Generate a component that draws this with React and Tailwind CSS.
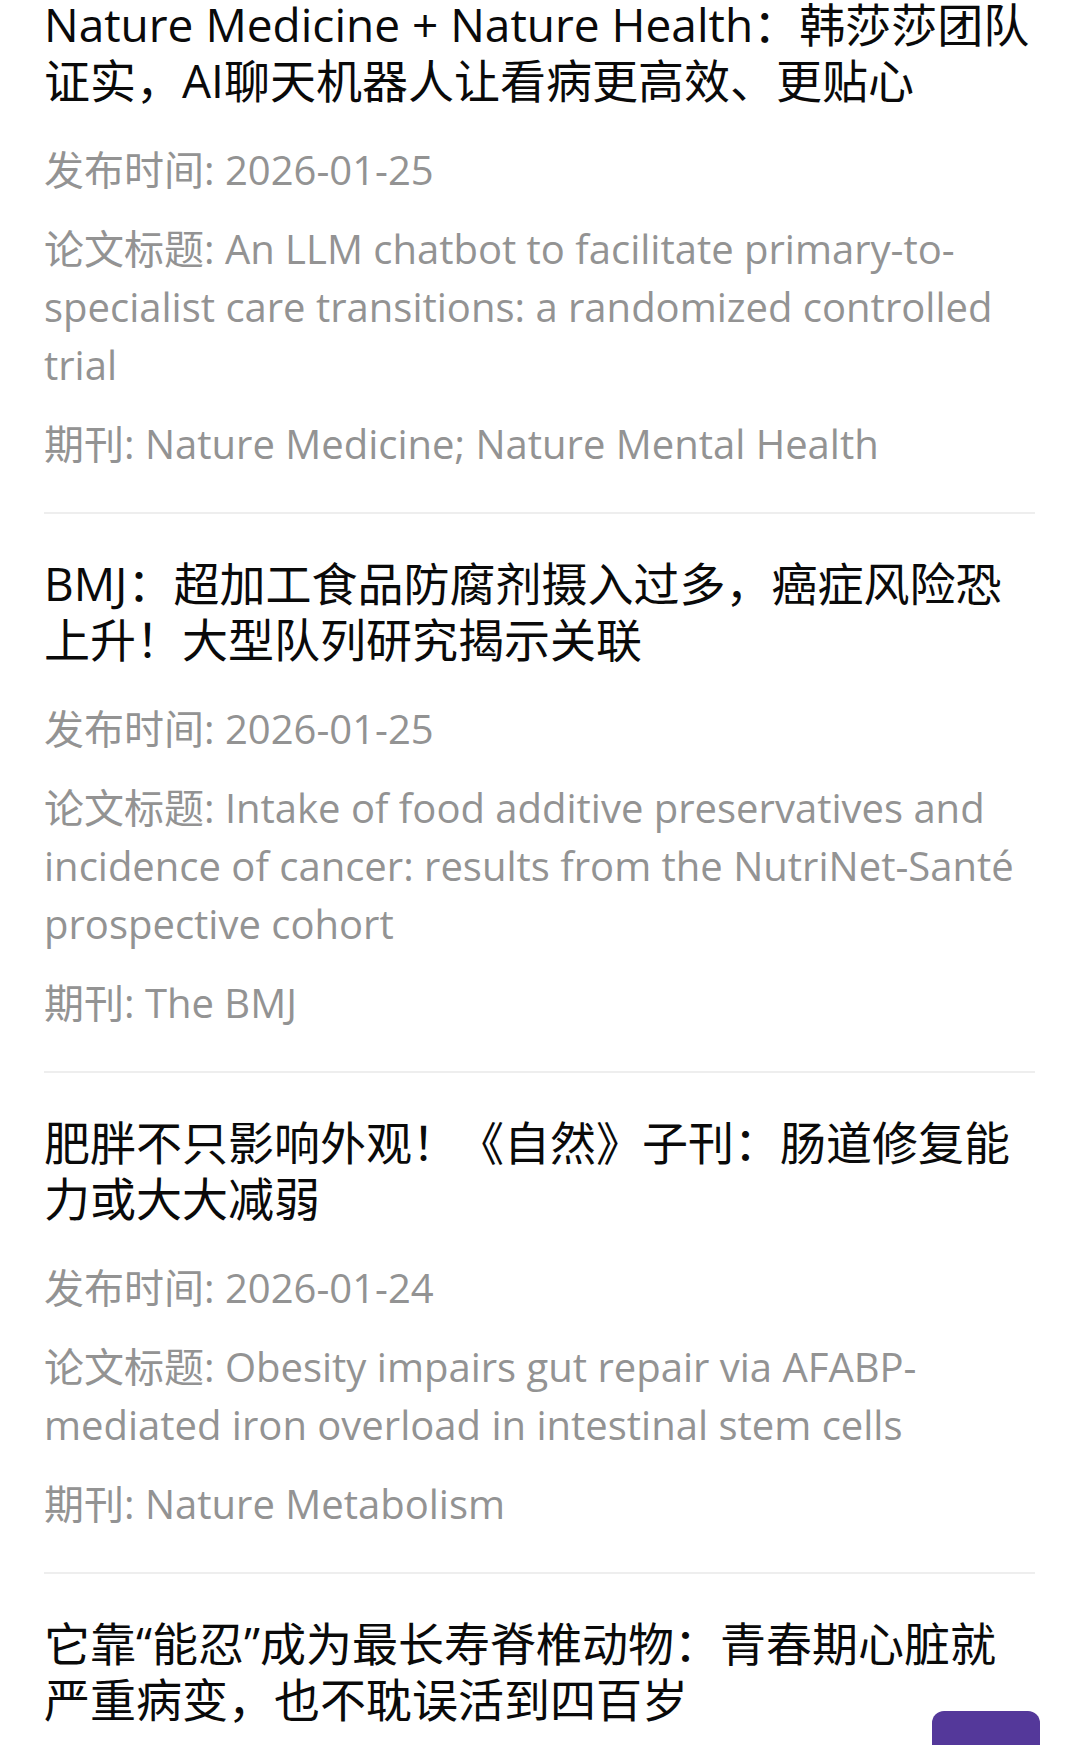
import React from "react";

const items = [
  {
    title: "Nature Medicine + Nature Health：韩莎莎团队证实，AI聊天机器人让看病更高效、更贴心",
    date: "2026-01-25",
    paper: "An LLM chatbot to facilitate primary-to-specialist care transitions: a randomized controlled trial",
    journal: "Nature Medicine; Nature Mental Health",
  },
  {
    title: "BMJ：超加工食品防腐剂摄入过多，癌症风险恐上升！大型队列研究揭示关联",
    date: "2026-01-25",
    paper: "Intake of food additive preservatives and incidence of cancer: results from the NutriNet-Santé prospective cohort",
    journal: "The BMJ",
  },
  {
    title: "肥胖不只影响外观！《自然》子刊：肠道修复能力或大大减弱",
    date: "2026-01-24",
    paper: "Obesity impairs gut repair via AFABP-mediated iron overload in intestinal stem cells",
    journal: "Nature Metabolism",
  },
  {
    title: "它靠“能忍”成为最长寿脊椎动物：青春期心脏就严重病变，也不耽误活到四百岁",
  },
];

const font = { fontFamily: '"Open Sans", "Noto Sans CJK SC", sans-serif' };

export default function App() {
  return (
    <div className="relative w-[1079px] h-[1745px] overflow-hidden bg-white" style={font}>
      <div className="px-[44px] -mt-[4px]">
        {items.map((it, i) => (
          <div key={i}>
            <div className={i === 0 ? "pb-[39px]" : "pt-[41px] pb-[39px]"}>
              <h2 className="text-[46px] leading-[56px] text-[#0a0a0a] font-normal">{it.title}</h2>
              {it.date && (
                <div className="mt-[33px] flex flex-col gap-[21px] text-[40px] leading-[58px] text-[#939393]">
                  <p>发布时间: {it.date}</p>
                  <p>论文标题: {it.paper}</p>
                  <p>期刊: {it.journal}</p>
                </div>
              )}
            </div>
            {it.date && <div className="h-[2px] bg-[#eeeeee]" />}
          </div>
        ))}
      </div>
      <div className="absolute left-[932px] top-[1711px] w-[108px] h-[60px] rounded-t-[12px] bg-[#54389a]" />
    </div>
  );
}
